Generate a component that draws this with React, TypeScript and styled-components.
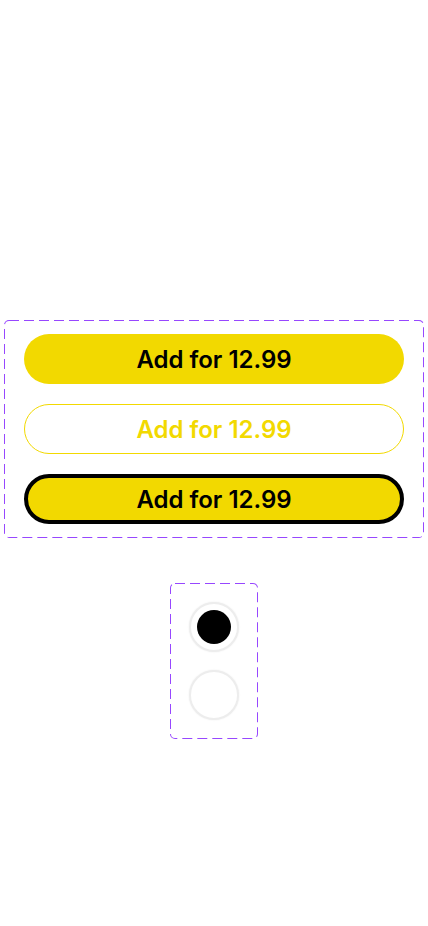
import React from "react";
import styled, { createGlobalStyle, css } from "styled-components";

const Global = createGlobalStyle`
  html, body { margin: 0; padding: 0; background: #ffffff; }
  body { font-family: Inter, "Noto Sans", sans-serif; }
  * { box-sizing: border-box; }
`;

const dashedBorder =
  "url(\"data:image/svg+xml,%3Csvg xmlns='http://www.w3.org/2000/svg' width='100%25' height='100%25'%3E%3Crect x='0' y='0' width='100%25' height='100%25' rx='5' ry='5' fill='none' stroke='%239747FF' stroke-width='2' stroke-dasharray='10 5'/%3E%3C/svg%3E\")";

const Page = styled.div`
  display: flex;
  flex-direction: column;
  align-items: center;
  padding-top: 320px;
  gap: 45px;
  min-height: 926px;
`;

const Frame = styled.div`
  background-image: ${dashedBorder};
  background-repeat: no-repeat;
  border-radius: 5px;
`;

const ButtonSet = styled(Frame)`
  width: 420px;
  padding: 14px 20px 14px 20px;
  display: flex;
  flex-direction: column;
  gap: 20px;
`;

type Variant = "filled" | "outline" | "focused";

const Button = styled.button<{ $variant: Variant }>`
  height: 50px;
  width: 100%;
  border-radius: 25px;
  font-family: Inter, "Noto Sans", sans-serif;
  font-weight: 600;
  font-size: 24px;
  display: flex;
  align-items: center;
  justify-content: center;
  cursor: pointer;
  padding: 0;
  ${({ $variant }) =>
    $variant === "filled"
      ? css`
          background: #f2d900;
          color: #000;
          border: none;
        `
      : $variant === "outline"
      ? css`
          background: #fff;
          color: #f2d900;
          border: 1px solid #f2d900;
        `
      : css`
          background: #f2d900;
          color: #000;
          border: 4px solid #000;
        `}
`;

const RadioSet = styled(Frame)`
  width: 88px;
  padding: 19px;
  display: flex;
  flex-direction: column;
  gap: 18px;
`;

const Radio = styled.div`
  width: 50px;
  height: 50px;
  border-radius: 50%;
  background: #fff;
  border: 2px solid #ededed;
  box-shadow: 0 0 2px rgba(0, 0, 0, 0.08);
  display: flex;
  align-items: center;
  justify-content: center;
`;

const Dot = styled.div`
  width: 34px;
  height: 34px;
  border-radius: 50%;
  background: #000;
`;

export default function App() {
  return (
    <>
      <Global />
      <Page>
        <ButtonSet>
          <Button $variant="filled">Add for 12.99</Button>
          <Button $variant="outline">Add for 12.99</Button>
          <Button $variant="focused">Add for 12.99</Button>
        </ButtonSet>
        <RadioSet>
          <Radio>
            <Dot />
          </Radio>
          <Radio />
        </RadioSet>
      </Page>
    </>
  );
}
